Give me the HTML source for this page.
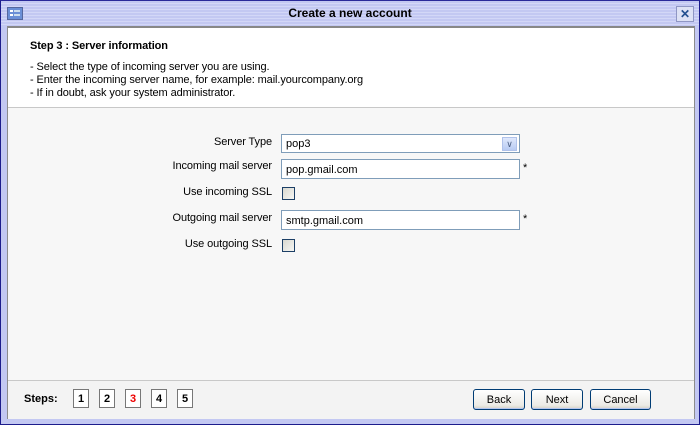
<!DOCTYPE html>
<html><head><style>
*{margin:0;padding:0;box-sizing:border-box}
body{width:700px;height:425px;overflow:hidden;font-family:"Liberation Sans",Tahoma,sans-serif;font-size:11px;color:#000;background:#c3c8f2}
.win{position:absolute;left:0;top:0;width:700px;height:425px;border:1px solid #1c1c8c;border-top-color:#2a2a9a;background:#c3c8f2}
.title{position:absolute;left:0;top:0;width:698px;height:24px;background:repeating-linear-gradient(#c3c8f2 0 2px,#d3d7f7 2px 3px);}
.title span{position:absolute;left:0;width:698px;top:5px;text-align:center;font-weight:bold;font-size:12px}
.ico{position:absolute;left:6px;top:6px;width:16px;height:13px;border:1px solid #55679e;background:#6b8fd6}
.ico:before{content:"";position:absolute;left:2px;top:2px;width:3px;height:2px;background:#fff;box-shadow:0 4px 0 #fff}
.ico:after{content:"";position:absolute;left:6px;top:2px;width:6px;height:2px;background:#cde;box-shadow:0 4px 0 #cde}
.x{position:absolute;right:5px;top:5px;width:18px;height:16px;border:1px solid #8f96c4;background:#dde1f5;color:#234f8f;font-weight:bold;font-size:12px;text-align:center;line-height:14px}
.body{position:absolute;left:6px;top:25px;width:688px;height:393px;border:1px solid #8c8c8c;border-top:2px solid #888;background:#f7f7f7}
.head{position:absolute;left:0;top:0;width:686px;height:80px;background:#fff;border-bottom:1px solid #c8c8c8}
.head h1{position:absolute;left:22px;top:12px;font-size:11px;font-weight:bold;letter-spacing:-0.1px}
.head p{position:absolute;left:22px;top:33px;line-height:13px;letter-spacing:-0.1px}
.lbl{position:absolute;width:264px;text-align:right;left:0;letter-spacing:-0.1px}
.inp{position:absolute;left:273px;width:239px;height:20px;border:1px solid #7f9db9;background:#fff;padding:3px 0 0 4px}
.star{position:absolute;left:515px}
.cb{position:absolute;left:274px;width:13px;height:13px;border:1px solid #1c3f66;background:linear-gradient(135deg,#d8d8d0,#f6f6f3)}
.dd{position:absolute;right:2px;top:2px;width:15px;height:14px;background:linear-gradient(#dfe8fc,#b8cbf3);border:1px solid #b0c2ea;color:#4d6185;font-size:9px;text-align:center;line-height:12px}
.foot{position:absolute;left:0;top:352px;width:686px;height:39px;border-top:1px solid #c8c8c8;background:#f3f3f3}
.steps{position:absolute;left:16px;top:12px;font-weight:bold}
.sb{position:absolute;top:8px;width:16px;height:19px;border:1px solid #777;background:#fff;text-align:center;font-weight:bold;line-height:18px}
.btn{position:absolute;top:8px;height:21px;border:1px solid #003c74;border-radius:3px;background:linear-gradient(#fff,#ecebe6 80%,#d6d0c5);text-align:center;line-height:20px;box-shadow:inset 0 -1px 0 #b4c6ef}
</style></head><body>
<div class="win">
<div class="title"><div class="ico"></div><span>Create a new account</span><div class="x">✕</div></div>
<div class="body">
<div class="head"><h1>Step 3 : Server information</h1>
<p>- Select the type of incoming server you are using.<br>- Enter the incoming server name, for example: mail.yourcompany.org<br>- If in doubt, ask your system administrator.</p></div>
<div class="lbl" style="top:108px">Server Type</div>
<div class="inp" style="top:106px;height:19px;padding-top:3px">pop3<div class="dd">&#8744;</div></div>
<div class="lbl" style="top:132px">Incoming mail server</div>
<div class="inp" style="top:131px;padding-top:4px">pop.gmail.com</div><div class="star" style="top:134px">*</div>
<div class="lbl" style="top:158px">Use incoming SSL</div>
<div class="cb" style="top:159px"></div>
<div class="lbl" style="top:184px">Outgoing mail server</div>
<div class="inp" style="top:182px;padding-top:4px">smtp.gmail.com</div><div class="star" style="top:185px">*</div>
<div class="lbl" style="top:210px">Use outgoing SSL</div>
<div class="cb" style="top:211px"></div>
<div class="foot">
<div class="steps">Steps:</div>
<div class="sb" style="left:65px">1</div><div class="sb" style="left:91px">2</div><div class="sb" style="left:117px;color:#e00">3</div><div class="sb" style="left:143px">4</div><div class="sb" style="left:169px">5</div>
<div class="btn" style="left:465px;width:52px">Back</div>
<div class="btn" style="left:523px;width:52px">Next</div>
<div class="btn" style="left:582px;width:61px">Cancel</div>
</div>
</div>
</div>
</body></html>
